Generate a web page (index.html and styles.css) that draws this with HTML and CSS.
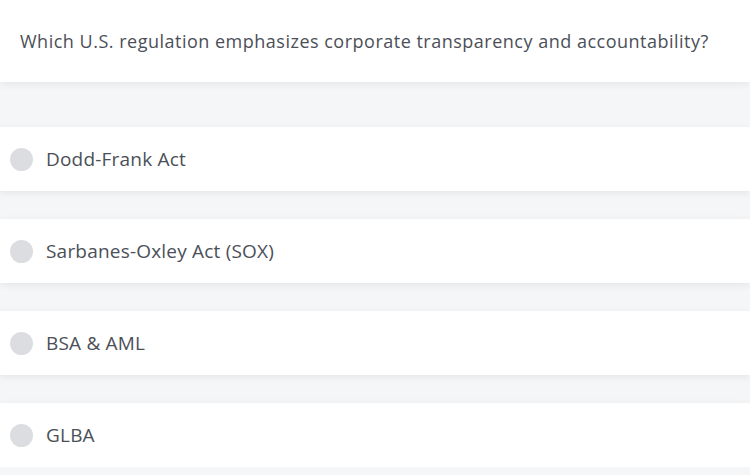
FILE: index.html
```html
<!DOCTYPE html>
<html lang="en">
<head>
    <meta charset="UTF-8">
    <meta name="viewport" content="width=device-width, initial-scale=1.0">
    <title>Quiz Question</title>
    <link rel="stylesheet" href="styles.css">
</head>
<body>

    <div class="question">
        Which U.S. regulation emphasizes corporate transparency and accountability?
    </div>

    <div class="options">
        <label class="option">
            <span class="radio"></span>
            <span class="option-text">Dodd-Frank Act</span>
        </label>
        <label class="option">
            <span class="radio"></span>
            <span class="option-text">Sarbanes-Oxley Act (SOX)</span>
        </label>
        <label class="option">
            <span class="radio"></span>
            <span class="option-text">BSA &amp; AML</span>
        </label>
        <label class="option">
            <span class="radio"></span>
            <span class="option-text">GLBA</span>
        </label>
    </div>

</body>
</html>
```

FILE: styles.css
```css
body {
    font-family: "Open Sans", "Noto Sans", sans-serif;
    background-color: #f5f6f8;
    color: #4b4f58;
    margin: 0;
    padding: 0;
}

.question {
    background-color: #fff;
    height: 82px;
    padding: 0 20px;
    display: flex;
    align-items: center;
    font-size: 18px;
    letter-spacing: 0.5px;
    box-shadow: 0 2px 8px rgba(0, 0, 0, 0.07);
}

.options {
    display: flex;
    flex-direction: column;
    gap: 28px;
    padding-top: 45px;
}

.option {
    background-color: #fff;
    height: 64px;
    display: flex;
    align-items: center;
    padding-left: 10px;
    box-shadow: 0 2px 8px rgba(0, 0, 0, 0.07);
    cursor: pointer;
}

.radio {
    width: 23px;
    height: 23px;
    border-radius: 50%;
    background-color: #dcdde0;
    margin-right: 13px;
    flex-shrink: 0;
}

.option-text {
    font-size: 19px;
    letter-spacing: 0.2px;
}
```
